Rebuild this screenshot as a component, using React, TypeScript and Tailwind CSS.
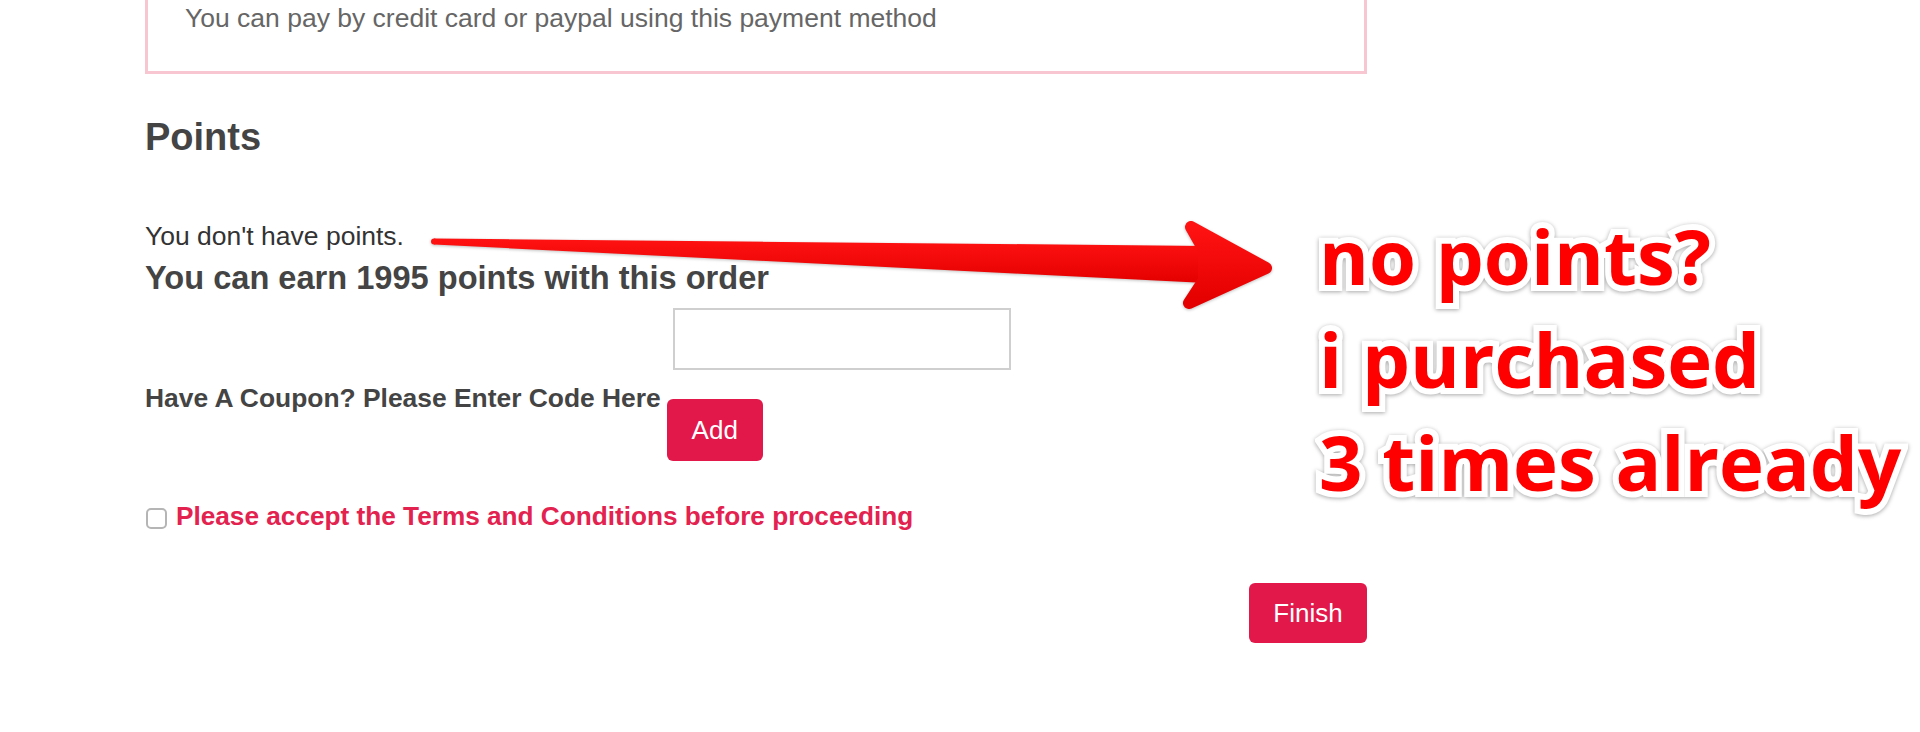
import React from "react";

function Arrow() {
  return (
    <svg
      className="absolute left-0 top-0 pointer-events-none [filter:drop-shadow(0_1px_1.5px_rgba(0,0,0,0.25))]"
      width={1920}
      height={732}
      viewBox="0 0 1920 732"
    >
      <defs>
        <linearGradient id="arrowRed" x1="0" y1="0" x2="0" y2="1">
          <stop offset="0" stopColor="#ff1212" />
          <stop offset="1" stopColor="#e40000" />
        </linearGradient>
      </defs>
      {/* shaft, thin at the tail and widening towards the head */}
      <path d="M434 238.5 L1206 246 L1206 283 L434 244.5 Z" fill="url(#arrowRed)" />
      <circle cx={434} cy={241.5} r={3} fill="#ff1212" />
      {/* head with rounded wing tips */}
      <path
        d="M1204 250 L1191 227 L1266 268 L1189 303 L1204 280 Z"
        fill="url(#arrowRed)"
        stroke="url(#arrowRed)"
        strokeWidth={12}
        strokeLinejoin="round"
      />
    </svg>
  );
}

export default function App() {
  return (
    <div className="relative w-full h-[732px] overflow-hidden bg-white font-['Liberation_Sans',Arial,sans-serif]">
      <div className="ml-[145px] w-[1222px] flex flex-col">
        {/* Payment method box, top cut off */}
        <div className="border-x-[3px] border-b-[3px] border-[#f8c6d0] pl-[37px] pb-[35px]">
          <p className="text-[26.5px] leading-[36px] text-[#666]">
            You can pay by credit card or paypal using this payment method
          </p>
        </div>

        <h2 className="mt-[41px] text-[38px] leading-[44px] font-bold text-[#444]">Points</h2>

        <p className="mt-[62px] text-[26.5px] leading-[30px] text-[#333]">You don't have points.</p>
        <p className="mt-[9px] text-[32.6px] leading-[36px] font-bold text-[#444]">
          You can earn 1995 points with this order
        </p>

        {/* Coupon */}
        <div className="mt-[12px] flex items-start">
          <label className="mt-[75px] text-[26.4px] leading-[30px] font-bold text-[#444] whitespace-nowrap">
            Have A Coupon? Please Enter Code Here
          </label>
          <div className="ml-[6px] flex flex-col items-start">
            <input
              type="text"
              className="ml-[6px] w-[338px] h-[62px] border-2 border-[#cfcfcf] bg-white outline-none"
            />
            <button className="mt-[29px] w-[96px] h-[62px] rounded-[6px] bg-[#e2184b] text-white text-[26px]">
              Add
            </button>
          </div>
        </div>

        {/* Terms */}
        <div className="mt-[40px] flex items-center">
          <input
            type="checkbox"
            className="appearance-none ml-[1px] w-[21px] h-[21px] rounded-[5px] border-2 border-[#b5b5b5] bg-white mt-[5px]"
          />
          <span className="ml-[9px] text-[26.2px] leading-[30px] font-bold text-[#e3224f]">
            Please accept the Terms and Conditions before proceeding
          </span>
        </div>

        <div className="mt-[52px] flex justify-end">
          <button className="w-[118px] h-[60px] rounded-[6px] bg-[#e2184b] text-white text-[26px]">
            Finish
          </button>
        </div>
      </div>

      <Arrow />

      {/* annotation */}
      <div className="absolute left-[1319px] top-[204px] font-['Open_Sans',sans-serif] font-bold text-[76px] leading-[103px] text-[#ff0000] whitespace-nowrap [-webkit-text-stroke:12px_white] [paint-order:stroke_fill] [filter:drop-shadow(0_1px_2px_rgba(0,0,0,0.35))]">
        <div>no points?</div>
        <div>i purchased</div>
        <div>3 times already</div>
      </div>
    </div>
  );
}
